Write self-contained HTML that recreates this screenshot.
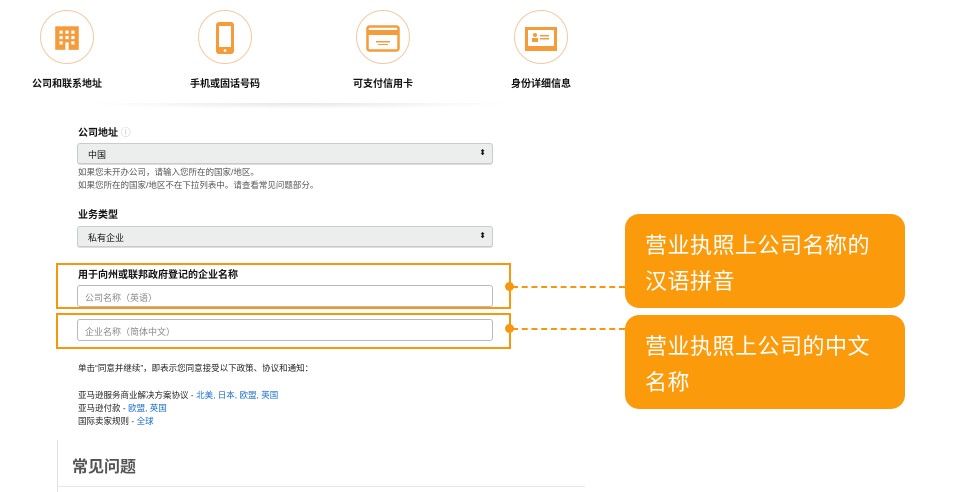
<!DOCTYPE html>
<html><head><meta charset="utf-8"><style>
*{margin:0;padding:0;box-sizing:border-box}
body{width:961px;height:492px;background:#fff;position:relative;overflow:hidden;font-family:"Liberation Sans","Noto Sans CJK SC",sans-serif;color:#111}
.a{position:absolute}
.c{position:absolute;width:54px;height:54px;border:1px solid #f3c9a0;border-radius:50%;top:10px}
.lbl{position:absolute;top:75px;font-size:10px;font-weight:bold;width:120px;text-align:center}
.fl{position:absolute;left:78px;font-size:10px;font-weight:bold}
.sel{position:absolute;left:77px;width:416px;height:21px;background:#eceded;border:1px solid #c9cbcd;border-radius:3px;font-size:9px;padding:4px 10px;box-shadow:0 1px 0 #ddd}
.sel:after{content:"⬍";position:absolute;right:6px;top:4px;font-size:8px}
.inp{position:absolute;left:77px;width:416px;height:22px;background:#fff;border:1px solid #b8bbbe;border-radius:3px;font-size:9px;padding:5px 7px;color:#888}
.hl{position:absolute;border:2px solid #f7970f}
.dot{position:absolute;width:9px;height:9px;border-radius:50%;background:#f7970f}
.dash{position:absolute;height:0;border-top:2px dashed #f7970f}
.call{position:absolute;left:625px;width:280px;height:94px;background:#fb9a0b;border-radius:14px;color:#fff;font-size:22px;line-height:36px;padding:14px 0 0 20px;letter-spacing:0.5px}
.s{font-size:8.5px;position:absolute;left:78px;color:#222}
.s b{color:#1a6fc9;font-weight:normal}
</style></head><body>
<div class="c" style="left:40px"></div>
<svg class="a" style="left:52px;top:22px" width="30" height="30" viewBox="0 0 28 28"><rect x="3" y="4" width="22" height="22" fill="#f59b3a"/><g fill="#fff"><rect x="7" y="8" width="3" height="3"/><rect x="12.5" y="8" width="3" height="3"/><rect x="18" y="8" width="3" height="3"/><rect x="7" y="13" width="3" height="3"/><rect x="12.5" y="13" width="3" height="3"/><rect x="18" y="13" width="3" height="3"/><rect x="7" y="18" width="3" height="3"/><rect x="18" y="18" width="3" height="3"/><rect x="12.5" y="19" width="3" height="7"/></g></svg>
<div class="c" style="left:198px"></div>
<svg class="a" style="left:214px;top:21px" width="22" height="34"><rect x="2" y="1" width="18" height="32" rx="3" fill="#f59b3a"/><rect x="5" y="5" width="12" height="21" fill="#fff"/><circle cx="11" cy="29.5" r="1.3" fill="#fff"/></svg>
<div class="c" style="left:356px"></div>
<svg class="a" style="left:366px;top:25px" width="34" height="28"><rect x="1.5" y="1.5" width="31" height="24" rx="2" fill="none" stroke="#f59b3a" stroke-width="2.5"/><rect x="1.5" y="5" width="31" height="5" fill="#f59b3a"/><rect x="10" y="16" width="14" height="1.5" fill="#f59b3a"/><rect x="12" y="19" width="10" height="1" fill="#f59b3a"/></svg>
<div class="c" style="left:514px"></div>
<svg class="a" style="left:524px;top:26px" width="34" height="26"><rect x="1" y="1" width="32" height="24" fill="#f59b3a"/><rect x="4" y="4" width="26" height="16" fill="#fff"/><circle cx="11" cy="9" r="2" fill="#f59b3a"/><rect x="8" y="12" width="6" height="4" fill="#f59b3a"/><rect x="16" y="9" width="9" height="1.5" fill="#f59b3a"/><rect x="16" y="12" width="9" height="1.5" fill="#f59b3a"/></svg>
<div class="lbl" style="left:7px">公司和联系地址</div>
<div class="lbl" style="left:165px">手机或固话号码</div>
<div class="lbl" style="left:323px">可支付信用卡</div>
<div class="lbl" style="left:481px">身份详细信息</div>
<div class="a" style="left:90px;top:103px;width:420px;height:6px;background:radial-gradient(ellipse at center top,#e6e6e6,#fff 70%)"></div>

<div class="fl" style="top:124px">公司地址 <span style="color:#bbb;font-weight:normal">ⓘ</span></div>
<div class="sel" style="top:143px">中国</div>
<div class="s" style="top:166px;color:#555">如果您未开办公司，请输入您所在的国家/地区。</div>
<div class="s" style="top:179px;color:#555">如果您所在的国家/地区不在下拉列表中。请查看常见问题部分。</div>
<div class="fl" style="top:206px">业务类型</div>
<div class="sel" style="top:226px">私有企业</div>
<div class="hl" style="left:56px;top:263px;width:455px;height:46px"></div>
<div class="fl" style="top:266px">用于向州或联邦政府登记的企业名称</div>
<div class="inp" style="top:285px">公司名称（英语）</div>
<div class="hl" style="left:56px;top:313px;width:455px;height:36px"></div>
<div class="inp" style="top:319px">企业名称（简体中文）</div>
<div class="dot" style="left:505px;top:282px"></div>
<div class="dot" style="left:505px;top:324px"></div>
<div class="dash" style="left:512px;top:286px;width:113px"></div>
<div class="dash" style="left:512px;top:328px;width:113px"></div>
<div class="call" style="top:214px">营业执照上公司名称的<br>汉语拼音</div>
<div class="call" style="top:315px">营业执照上公司的中文<br>名称</div>

<div class="s" style="top:362px">单击“同意并继续”，即表示您同意接受以下政策、协议和通知：</div>
<div class="s" style="top:389px">亚马逊服务商业解决方案协议 - <b>北美, 日本, 欧盟, 英国</b></div>
<div class="s" style="top:402px">亚马逊付款 - <b>欧盟, 英国</b></div>
<div class="s" style="top:415px">国际卖家规则 - <b>全球</b></div>
<div class="a" style="left:57px;top:440px;width:1px;height:52px;background:#e2e2e2"></div>
<div class="a" style="left:72px;top:453px;font-size:16px;font-weight:bold;color:#555">常见问题</div>
<div class="a" style="left:58px;top:486px;width:527px;height:1px;background:#e6e6e6"></div>
</body></html>
